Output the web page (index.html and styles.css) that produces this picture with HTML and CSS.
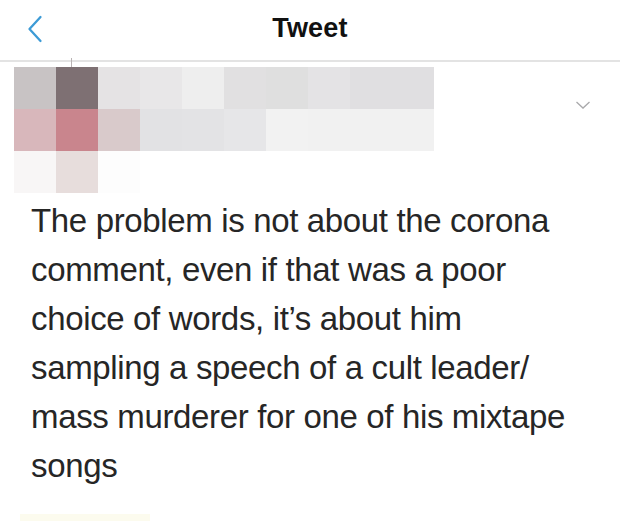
FILE: index.html
```html
<!DOCTYPE html>
<html>
  <head>
    <meta charset="UTF-8" />
    <title>Tweet</title>
    <link rel="stylesheet" href="styles.css">
  </head>
  <body>
    <div class="header">
      <svg class="back" width="16" height="28" viewBox="0 0 16 28">
        <path d="M13.5 2 L2.5 14 L13.5 26" fill="none" stroke="#3d9bd6" stroke-width="2.3" stroke-linecap="round" stroke-linejoin="round" />
      </svg>
      <h1>Tweet</h1>
    </div>

    <div class="author">
      <div class="blur">
        <span class="tick"></span>
        <div class="cell"></div><div class="cell"></div><div class="cell"></div><div class="cell"></div><div class="cell"></div>
        <div class="cell"></div><div class="cell"></div><div class="cell"></div><div class="cell"></div><div class="cell"></div>
        <div class="cell"></div><div class="cell"></div><div class="cell"></div><div class="cell"></div><div class="cell"></div>
        <div class="cell"></div><div class="cell"></div><div class="cell"></div><div class="cell"></div><div class="cell"></div>
        <div class="cell"></div><div class="cell"></div><div class="cell"></div><div class="cell"></div><div class="cell"></div>
        <div class="cell"></div><div class="cell"></div><div class="cell"></div><div class="cell"></div><div class="cell"></div>
      </div>
      <svg class="more" width="16" height="10" viewBox="0 0 16 10">
        <path d="M1.5 2 L8 8 L14.5 2" fill="none" stroke="#a9a9ab" stroke-width="1.3" />
      </svg>
    </div>

    <p class="tweet-text">
      The problem is not about the corona comment, even if that was a poor choice of words, it’s about him sampling a speech of a cult leader/ mass murderer for one of his mixtape songs
    </p>

    <div class="footer-blur"></div>
  </body>
</html>
```

FILE: styles.css
```css
body {
  margin: 0;
  width: 620px;
  height: 525px;
  overflow: hidden;
  background-color: #fff;
  font-family: "Liberation Sans", Arial, sans-serif;
  color: #111;
}

.header {
  height: 60px;
  border-bottom: 2px solid #e3e3e3;
  display: flex;
  align-items: center;
  justify-content: center;
  position: relative;
}

.header h1 {
  margin: 0 0 4px 0;
  font-size: 27px;
  font-weight: bold;
  letter-spacing: 0.2px;
}

.back {
  position: absolute;
  left: 27px;
  top: 15px;
}

.author {
  display: flex;
  justify-content: space-between;
  align-items: flex-start;
  padding: 5px 29px 0 14px;
}

.blur {
  position: relative;
  display: grid;
  grid-template-columns: repeat(10, 42px);
  grid-template-rows: repeat(3, 42px);
}

.tick {
  position: absolute;
  left: 57px;
  top: -9px;
  width: 1px;
  height: 9px;
  background-color: #b9b3b4;
}

.more {
  margin-top: 33px;
}

.cell:nth-child(2) { background-color: #c8c3c4; }
.cell:nth-child(3) { background-color: #7e7073; }
.cell:nth-child(4) { background-color: #e5e3e4; }
.cell:nth-child(5) { background-color: #e8e7e8; }
.cell:nth-child(6) { background-color: #eeeeee; }
.cell:nth-child(7) { background-color: #e1e0e1; }
.cell:nth-child(8) { background-color: #dfdfdf; }
.cell:nth-child(9) { background-color: #e4e3e5; }
.cell:nth-child(10) { background-color: #e0dfe1; }
.cell:nth-child(11) { background-color: #e0dfe1; }

.cell:nth-child(12) { background-color: #d8b7bb; }
.cell:nth-child(13) { background-color: #c9858d; }
.cell:nth-child(14) { background-color: #d9cacb; }
.cell:nth-child(15) { background-color: #e2e2e4; }
.cell:nth-child(16) { background-color: #e3e3e5; }
.cell:nth-child(17) { background-color: #e6e6e8; }
.cell:nth-child(18) { background-color: #f2f2f2; }
.cell:nth-child(19) { background-color: #f1f1f1; }
.cell:nth-child(20) { background-color: #f1f1f1; }
.cell:nth-child(21) { background-color: #f1f1f1; }

.cell:nth-child(22) { background-color: #f8f6f6; }
.cell:nth-child(23) { background-color: #e7dddc; }
.cell:nth-child(24) { background-color: #fdfdfd; }

.tweet-text {
  margin: 3px 0 0 0;
  padding: 0 40px 0 31px;
  font-size: 33px;
  line-height: 49px;
  letter-spacing: -0.35px;
  color: #262626;
}

.footer-blur {
  margin: 24px 0 0 20px;
  width: 130px;
  height: 7px;
  background-color: #fcfbee;
}
```
